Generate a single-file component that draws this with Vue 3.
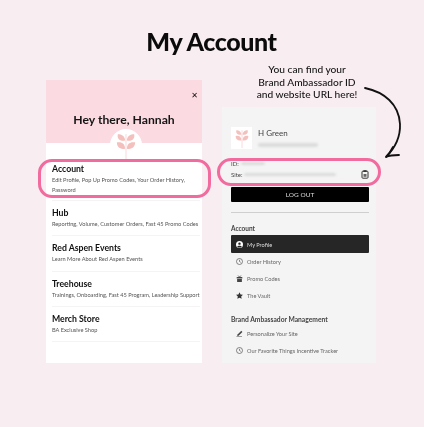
<script setup>
const menu = [
  { title: 'Account', sub: 'Edit Profile, Pop Up Promo Codes, Your Order History, Password' },
  { title: 'Hub', sub: 'Reporting, Volume, Customer Orders, Fast 45 Promo Codes' },
  { title: 'Red Aspen Events', sub: 'Learn More About Red Aspen Events' },
  { title: 'Treehouse', sub: 'Trainings, Onboarding, Fast 45 Program, Leadership Support' },
  { title: 'Merch Store', sub: 'BA Exclusive Shop' },
]
const accountLinks = [
  { label: 'My Profile', icon: 'user', active: true },
  { label: 'Order History', icon: 'clock' },
  { label: 'Promo Codes', icon: 'gift' },
  { label: 'The Vault', icon: 'star' },
]
const managementLinks = [
  { label: 'Personalize Your Site', icon: 'pen' },
  { label: 'Our Favorite Things Incentive Tracker', icon: 'clock' },
]
</script>

<template>
  <div class="page">
    <h1 class="title">My Account</h1>
    <div class="columns">
      <section class="mobile">
        <header class="mobile-head">
          <span class="close">✕</span>
          <h2>Hey there, Hannah</h2>
          <div class="leaf-badge">
            <svg width="20" height="28" viewBox="0 0 22 30">
              <path d="M11 2v28" stroke="#f9d5d8" stroke-width="1" />
              <path d="M10 9C10 4 6 2 2 2 1 7 4 10 10 9zM12 9C12 4 16 2 20 2 21 7 18 10 12 9zM10 18C10 12 6 10 1 11 1 16 4 19 10 18zM12 18C12 12 16 10 21 11 21 16 18 19 12 18z" fill="#f3c0bd" />
            </svg>
          </div>
        </header>
        <ul class="menu">
          <li v-for="item in menu" :key="item.title" class="menu-row">
            <strong>{{ item.title }}</strong>
            <span>{{ item.sub }}</span>
          </li>
        </ul>
        <div class="ring ring-left"></div>
      </section>

      <div class="desktop-col">
        <p class="note">You can find your<br />Brand Ambassador ID<br />and website URL here!</p>
        <section class="desktop">
          <div class="profile">
            <div class="avatar">
              <svg width="14" height="21" viewBox="0 0 22 30">
                <path d="M11 2v28" stroke="#f9d5d8" stroke-width="1.4" />
                <path d="M10 9C10 4 6 2 2 2 1 7 4 10 10 9zM12 9C12 4 16 2 20 2 21 7 18 10 12 9zM10 18C10 12 6 10 1 11 1 16 4 19 10 18zM12 18C12 12 16 10 21 11 21 16 18 19 12 18z" fill="#f3c0bd" />
              </svg>
            </div>
            <div class="who">
              <span class="name">H Green</span>
              <span class="smudge email"></span>
            </div>
          </div>
          <div class="ids">
            <div class="id-line">ID: <span class="smudge id-val"></span></div>
            <div class="id-line">Site: <span class="smudge site-val"></span>
              <svg class="copy" width="8" height="9" viewBox="0 0 8 9">
                <rect x="1" y="1.2" width="6" height="7" rx="0.8" fill="none" stroke="#333" stroke-width="1" />
                <rect x="2.4" y="0.2" width="3.2" height="1.8" fill="#333" />
                <rect x="2.5" y="4" width="3" height="2.8" fill="#666" />
              </svg>
            </div>
          </div>
          <button class="logout">LOG OUT</button>
          <hr class="rule" />
          <h3 class="group first">Account</h3>
          <div v-for="link in accountLinks" :key="link.label" class="link" :class="{ active: link.active }">
            <svg class="ico" width="7" height="7" viewBox="0 0 10 10">
              <template v-if="link.icon === 'user'">
                <circle cx="5" cy="5" r="5" fill="#fff" />
                <circle cx="5" cy="3.8" r="1.7" fill="#222" />
                <path d="M1.8 8.4C2.5 6.4 7.5 6.4 8.2 8.4 6.5 9.6 3.5 9.6 1.8 8.4z" fill="#222" />
              </template>
              <template v-else-if="link.icon === 'clock'">
                <circle cx="5" cy="5" r="4.3" fill="none" stroke="#555" stroke-width="1" />
                <path d="M5 2.6V5l1.8 1.2" fill="none" stroke="#555" stroke-width="1" />
              </template>
              <template v-else-if="link.icon === 'gift'">
                <path d="M1 3h8v2H1zM1.6 5.800h6.800V10H1.600z" fill="#444" />
                <path d="M5 3 3 .8M5 3 7 .8" stroke="#444" stroke-width="1.1" />
              </template>
              <path v-else d="M5 .3l1.500 3.200 3.400.4-2.500 2.400.7 3.400L5 8.100 1.900 9.700l.7-3.400L.1 3.900l3.400-.4z" fill="#333" />
            </svg>
            <span>{{ link.label }}</span>
          </div>
          <h3 class="group second">Brand Ambassador Management</h3>
          <div v-for="link in managementLinks" :key="link.label" class="link">
            <svg class="ico" width="7" height="7" viewBox="0 0 10 10">
              <template v-if="link.icon === 'pen'">
                <path d="M2.200 6.600 7.600 1.200l1.500 1.500-5.400 5.400-2 .5z" fill="#444" />
                <path d="M.6 9.500h8" stroke="#555" stroke-width="0.9" />
              </template>
              <template v-else>
                <circle cx="5" cy="5" r="4.300" fill="none" stroke="#555" stroke-width="1" />
                <path d="M5 2.600V5l1.800 1.200" fill="none" stroke="#555" stroke-width="1" />
              </template>
            </svg>
            <span>{{ link.label }}</span>
          </div>
        </section>
        <div class="ring ring-right"></div>
        <svg class="arrow" width="42" height="74" viewBox="0 0 42 74">
          <path d="M1 1C20 5 35 17 36 37 36.500 49 31 61 22 70" fill="none" stroke="#111" stroke-width="1.800" stroke-linecap="round" />
          <path d="M29 60C27 64 25 67 22 70 26 68 30 68 35 68" fill="none" stroke="#111" stroke-width="1.800" stroke-linecap="round" />
        </svg>
      </div>
    </div>
  </div>
</template>

<style scoped>
.page {
  width: 424px;
  height: 427px;
  box-sizing: border-box;
  overflow: hidden;
  background: #f8edf1;
  color: #111;
  font-family: Lato, "Liberation Sans", sans-serif;
  padding-top: 25px;
  filter: blur(0.4px);
}
.title {
  margin: 0;
  text-align: center;
  font-size: 25px;
  line-height: 32px;
  font-weight: 900;
  letter-spacing: -0.4px;
  color: #0b0b0b;
  margin-left: -1px;
}
.columns {
  display: flex;
  align-items: flex-start;
  margin-top: 23px;
  padding-left: 46px;
  gap: 20px;
}
.mobile {
  position: relative;
  width: 156px;
  height: 283px;
  background: #fff;
}
.mobile-head {
  position: relative;
  height: 63px;
  background: #fbdae1;
  box-sizing: border-box;
  padding-top: 30px;
}
.mobile-head h2 {
  margin: 0;
  text-align: center;
  font-size: 12.200px;
  line-height: 19px;
  font-weight: 700;
  color: #151515;
}
.close {
  position: absolute;
  right: 4px;
  top: 10px;
  font-size: 8px;
  line-height: 12px;
  font-weight: 700;
  font-family: "DejaVu Sans", sans-serif;
}
.leaf-badge {
  position: absolute;
  left: 64px;
  top: 49px;
  width: 32px;
  height: 32px;
  padding-top: 3px;
  box-sizing: border-box;
  border-radius: 50%;
  background: #fff;
  display: flex;
  justify-content: center;
}
.menu {
  list-style: none;
  margin: 0;
  padding: 20px 2px 0 6px;
}
.menu-row {
  display: flex;
  flex-direction: column;
  box-sizing: border-box;
  height: 35.300px;
  border-bottom: 1px solid #f6f3f4;
}
.menu-row:first-child {
  height: 38px;
}
.menu-row:not(:first-child) {
  padding-top: 6px;
}
.menu-row strong {
  font-size: 8.700px;
  line-height: 12px;
  font-weight: 700;
  color: #111;
}
.menu-row span {
  font-size: 5.650px;
  line-height: 10px;
  color: #555;
}
.ring {
  position: absolute;
  box-sizing: border-box;
  border: 3px solid #f16b9f;
  border-radius: 14px;
  pointer-events: none;
}
.ring-left {
  left: -8px;
  top: 79px;
  width: 173px;
  height: 39px;
}
.desktop-col {
  position: relative;
  width: 154px;
  margin-top: -18px;
}
.note {
  margin: 0;
  height: 45px;
  box-sizing: border-box;
  padding-top: 1px;
  text-align: center;
  font-size: 10.200px;
  line-height: 12.500px;
  font-weight: 500;
  color: #151515;
  width: 170px;
}
.desktop {
  height: 256px;
  background: #f4f4f4;
  box-sizing: border-box;
  padding: 20px 7px 0 9px;
}
.profile {
  display: flex;
  gap: 6px;
}
.avatar {
  width: 21px;
  height: 22px;
  background: #fff;
  display: flex;
  align-items: center;
  justify-content: center;
}
.who {
  display: flex;
  flex-direction: column;
}
.name {
  font-size: 8px;
  line-height: 12px;
  color: #444;
}
.smudge {
  display: inline-block;
  height: 3.500px;
  background: #dcdcdc;
  border-radius: 2px;
  filter: blur(1px);
}
.email {
  width: 60px;
  margin-top: 4px;
}
.ids {
  margin-top: 9px;
}
.id-line {
  position: relative;
  font-size: 6px;
  line-height: 11px;
  color: #444;
  display: flex;
  align-items: center;
  gap: 2px;
}
.id-val {
  width: 24px;
}
.site-val {
  width: 92px;
}
.copy {
  position: absolute;
  right: 0;
  top: 1px;
}
.logout {
  display: block;
  width: 138px;
  height: 15px;
  margin-top: 7px;
  padding: 0;
  border: 0;
  border-radius: 1px;
  background: #000;
  color: #ddd;
  font-family: inherit;
  font-size: 6.500px;
  line-height: 15px;
}
.rule {
  width: 138px;
  margin: 10px 0 0;
  border: 0;
  border-top: 1px solid #cfcfcf;
}
.group {
  margin: 0;
  font-size: 6.500px;
  font-weight: 700;
  color: #444;
  line-height: 10px;
}
.group.first {
  margin-top: 11px;
  margin-bottom: 1px;
}
.group.second {
  margin-top: 10px;
  margin-bottom: 1px;
  font-size: 6.700px;
}
.link {
  display: flex;
  align-items: center;
  width: 138px;
  height: 17px;
  box-sizing: border-box;
  padding-left: 5px;
  gap: 4px;
  font-size: 5.600px;
  color: #666;
}
.link.active {
  height: 18px;
  background: #262626;
  color: #ddd;
  border-radius: 1px;
}
.ring-right {
  left: -5px;
  top: 96px;
  width: 164px;
  height: 28px;
}
.arrow {
  position: absolute;
  left: 142px;
  top: 25px;
  overflow: visible;
}
</style>
